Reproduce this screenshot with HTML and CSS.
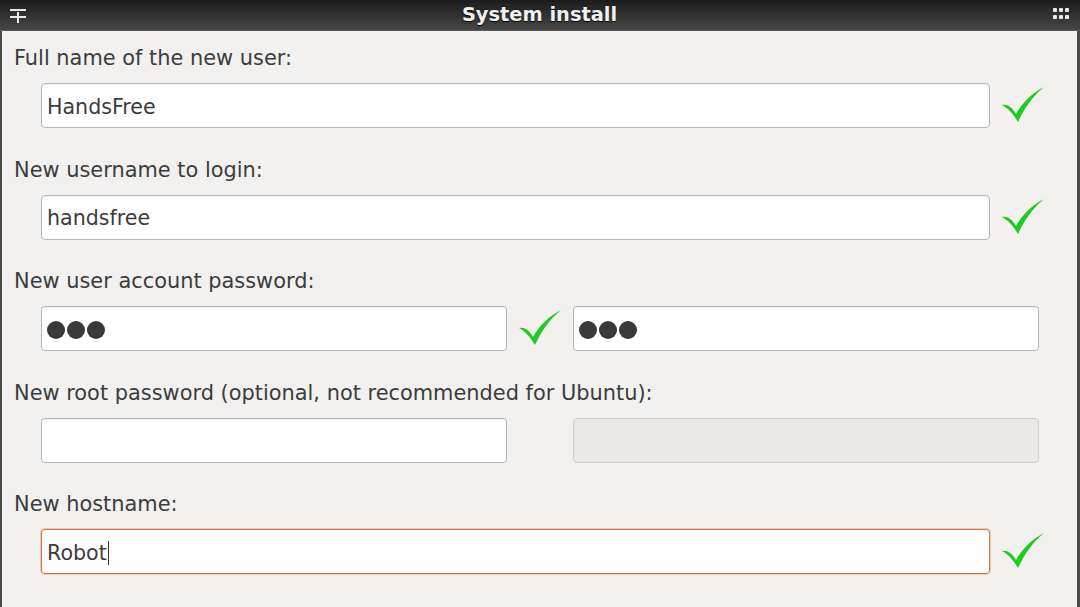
FILE: index.html
```html
<!DOCTYPE html>
<html>
<head>
<meta charset="utf-8">
<link rel="stylesheet" href="styles.css">
</head>
<body>
<div class="window">
  <div class="titlebar">
    <svg class="t-icon" width="16" height="14" viewBox="0 0 16 14"><rect x="0" y="0" width="16" height="2" fill="#e8e8e8"/><rect x="0" y="7" width="16" height="2" fill="#e8e8e8"/><rect x="7" y="3" width="2" height="11" fill="#e8e8e8"/></svg>
    <div class="title">System install</div>
    <svg class="grip" width="16" height="12" viewBox="0 0 16 12"><g fill="#e8e8e8"><rect x="0" y="0" width="4" height="4" rx="1"/><rect x="6" y="0" width="4" height="4" rx="1"/><rect x="12" y="0" width="4" height="4" rx="1"/><rect x="0" y="7" width="4" height="4" rx="1"/><rect x="6" y="7" width="4" height="4" rx="1"/><rect x="12" y="7" width="4" height="4" rx="1"/></g></svg>
  </div>
  <div class="content">
    <div class="field">
      <div class="label">Full name of the new user:</div>
      <div class="row">
        <div class="input wide">HandsFree</div>
        <svg class="check" viewBox="0 0 42 36"><path d="M0 18 C5 17 10 20 14 27 C20 16 30 6 42 0 C30 10 22 22 16 35 C12 28 6 21 0 18 Z" fill="#1fcb1f"/></svg>
      </div>
    </div>
    <div class="field">
      <div class="label">New username to login:</div>
      <div class="row">
        <div class="input wide">handsfree</div>
        <svg class="check" viewBox="0 0 42 36"><path d="M0 18 C5 17 10 20 14 27 C20 16 30 6 42 0 C30 10 22 22 16 35 C12 28 6 21 0 18 Z" fill="#1fcb1f"/></svg>
      </div>
    </div>
    <div class="field">
      <div class="label">New user account password:</div>
      <div class="row">
        <div class="input half"><span class="dots"><i></i><i></i><i></i></span></div>
        <svg class="check" viewBox="0 0 42 36"><path d="M0 18 C5 17 10 20 14 27 C20 16 30 6 42 0 C30 10 22 22 16 35 C12 28 6 21 0 18 Z" fill="#1fcb1f"/></svg>
        <div class="input half"><span class="dots"><i></i><i></i><i></i></span></div>
      </div>
    </div>
    <div class="field">
      <div class="label">New root password (optional, not recommended for Ubuntu):</div>
      <div class="row">
        <div class="input half"></div>
        <div class="spacer"></div>
        <div class="input half disabled"></div>
      </div>
    </div>
    <div class="field">
      <div class="label">New hostname:</div>
      <div class="row">
        <div class="input wide focus">Robot<span class="caret"></span></div>
        <svg class="check" viewBox="0 0 42 36"><path d="M0 18 C5 17 10 20 14 27 C20 16 30 6 42 0 C30 10 22 22 16 35 C12 28 6 21 0 18 Z" fill="#1fcb1f"/></svg>
      </div>
    </div>
  </div>
</div>
</body>
</html>
```
FILE: styles.css
```css
* { box-sizing: border-box; }
html, body { margin: 0; padding: 0; }
body {
  width: 1080px;
  height: 607px;
  overflow: hidden;
  background: #f2f1f0;
  font-family: "DejaVu Sans", "Open Sans", sans-serif;
}
.window {
  width: 1080px;
  height: 607px;
  border-left: 2px solid #4a4a48;
  border-right: 3px solid #4a4a48;
  background: #f2f1f0;
}
.titlebar {
  height: 31px;
  margin-left: -2px;
  margin-right: -3px;
  background: linear-gradient(#1c1c1c, #464646);
  border-bottom: 1px solid #5a5a58;
  display: flex;
  align-items: center;
  justify-content: space-between;
  padding: 0 11px 0 10px;
}
.t-icon { margin-top: 1px; }
.grip { margin-top: -2px; }
.title {
  color: #f0f0f0;
  font-weight: 700;
  font-size: 19.4px;
  letter-spacing: 0;
  text-shadow: 0 1px 1px #000;
  margin-top: -2px;
}
.content {
  padding: 13px 0 0 12px;
}
.field {
  margin-bottom: 27.5px;
}
.label {
  height: 26px;
  line-height: 26px;
  padding-top: 1px;
  font-size: 20.9px;
  color: #3c3c3c;
  margin-bottom: 13px;
}
.row {
  display: flex;
  align-items: center;
  padding-left: 27px;
  height: 45px;
}
.input {
  height: 45px;
  background: #ffffff;
  border: 1px solid #b9b7b3;
  border-radius: 4px;
  box-shadow: inset 0 1px 1px rgba(0,0,0,0.06);
  font-size: 20.6px;
  color: #3c3c3c;
  padding-left: 5px;
  padding-top: 2px;
  display: flex;
  align-items: center;
}
.wide { width: 949px; }
.half { width: 466px; }
.check {
  width: 42px;
  height: 36px;
  margin-left: 12px;
  margin-right: 12px;
  margin-top: -1px;
}
.spacer { width: 66px; }
.disabled {
  background: #e9e8e6;
  border-color: #cfcdca;
  box-shadow: none;
}
.focus {
  border-color: #e0703e;
  box-shadow: 0 0 0 1px rgba(233,120,74,0.35);
}
.caret {
  display: inline-block;
  width: 1px;
  height: 24px;
  background: #333;
  margin-left: 1px;
}
.dots {
  display: flex;
  gap: 2px;
  padding-left: 0;
  padding-top: 1px;
}
.dots i {
  display: block;
  width: 18px;
  height: 18px;
  border-radius: 50%;
  background: #3a3a3a;
}
```
